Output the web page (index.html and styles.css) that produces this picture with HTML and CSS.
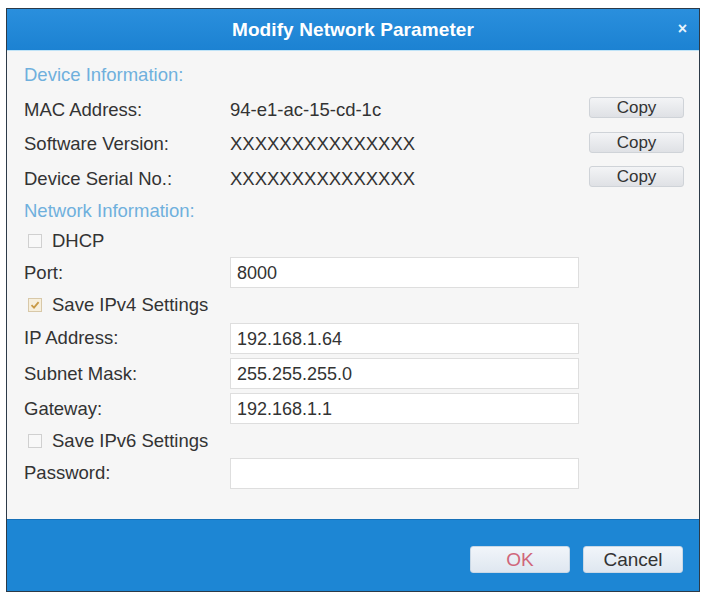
FILE: index.html
```html
<!DOCTYPE html>
<html>
<head>
<meta charset="utf-8">
<link rel="stylesheet" href="styles.css">
</head>
<body>
<div class="dialog">
  <div class="titlebar">
    <span class="title">Modify Network Parameter</span>
    <span class="close">×</span>
  </div>
  <div class="content">
    <div class="row h34"><span class="section">Device Information:</span></div>
    <div class="row h35"><span class="label">MAC Address:</span><span class="value">94-e1-ac-15-cd-1c</span><button class="copy">Copy</button></div>
    <div class="row h34"><span class="label">Software Version:</span><span class="value">XXXXXXXXXXXXXXX</span><button class="copy">Copy</button></div>
    <div class="row h35"><span class="label">Device Serial No.:</span><span class="value">XXXXXXXXXXXXXXX</span><button class="copy">Copy</button></div>
    <div class="row h30"><span class="section">Network Information:</span></div>
    <div class="row h29"><span class="check"></span><span class="checklabel">DHCP</span></div>
    <div class="row h35"><span class="label">Port:</span><div class="input">8000</div></div>
    <div class="row h30"><span class="check checked"><svg width="10" height="10" viewBox="0 0 10 10"><path d="M1.5 5.2 L4 7.6 L8.6 2.2" fill="none" stroke="#c99a45" stroke-width="1.8"/></svg></span><span class="checklabel">Save IPv4 Settings</span></div>
    <div class="row h36"><span class="label">IP Address:</span><div class="input">192.168.1.64</div></div>
    <div class="row h35"><span class="label">Subnet Mask:</span><div class="input">255.255.255.0</div></div>
    <div class="row h35"><span class="label">Gateway:</span><div class="input">192.168.1.1</div></div>
    <div class="row h29"><span class="check"></span><span class="checklabel">Save IPv6 Settings</span></div>
    <div class="row h36"><span class="label">Password:</span><div class="input"></div></div>
  </div>
  <div class="footer">
    <button class="btn ok">OK</button>
    <button class="btn cancel">Cancel</button>
  </div>
</div>
</body>
</html>
```
FILE: styles.css
```css
html, body {
  margin: 0;
  padding: 0;
  background: #ffffff;
}
body {
  padding: 8px 0 0 6px;
  font-family: "Liberation Sans", Arial, sans-serif;
}
.dialog {
  width: 692px;
  height: 582px;
  border: 1px solid #2c3a48;
  background: #f6f6f6;
  display: flex;
  flex-direction: column;
}
.titlebar {
  height: 41px;
  background: linear-gradient(#2a8fdd, #1c82d2);
  border-bottom: 1px solid #bfe3f7;
  position: relative;
  display: flex;
  align-items: center;
  justify-content: center;
}
.title {
  color: #ffffff;
  font-weight: bold;
  font-size: 19px;
  letter-spacing: 0.1px;
}
.close {
  position: absolute;
  right: 12px;
  top: 11px;
  color: #e8f4fc;
  font-weight: bold;
  font-size: 16px;
}
.content {
  flex: 1;
  padding: 7px 0 0 17px;
  display: flex;
  flex-direction: column;
}
.row {
  display: flex;
  align-items: center;
  font-size: 18.5px;
  color: #333;
}
.h29 { height: 29px; }
.h30 { height: 30px; }
.h34 { height: 34px; }
.h35 { height: 35px; }
.h36 { height: 36px; }
.section {
  color: #6fb0dd;
}
.label {
  width: 206px;
  flex: none;
}
.value {
  width: 359px;
  flex: none;
}
.copy {
  width: 95px;
  height: 21px;
  margin-top: -4px;
  padding: 0;
  border: 1px solid #cfd3d8;
  border-radius: 3px;
  background: linear-gradient(#f3f4f6, #dfe1e5);
  font-family: "Liberation Sans", Arial, sans-serif;
  font-size: 17px;
  line-height: 19px;
  color: #333;
  display: flex;
  justify-content: center;
  align-items: center;
}
.input {
  width: 341px;
  height: 29px;
  border: 1px solid #dedede;
  background: #ffffff;
  padding-left: 6px;
  line-height: 31px;
  font-size: 18px;
  color: #333;
  box-sizing: content-box;
}
.check {
  width: 12px;
  height: 12px;
  border: 1px solid #d0d0d0;
  background: #f8f8f8;
  margin-left: 4px;
  margin-right: 10px;
  display: flex;
  align-items: center;
  justify-content: center;
}
.check.checked {
  background: #f7efdc;
  border-color: #d8c8a8;
}
.footer {
  height: 72px;
  border-top: 1px solid #1670b8;
  background: #1d86d4;
  display: flex;
  justify-content: flex-end;
  align-items: flex-start;
  padding: 26px 16px 0 0;
  box-sizing: border-box;
  gap: 13px;
}
.btn {
  width: 100px;
  height: 27px;
  padding: 0;
  border: 1px solid #c9d8e6;
  border-radius: 3px;
  background: linear-gradient(#f1f5fa, #dfe7f0);
  font-family: "Liberation Sans", Arial, sans-serif;
  font-size: 19px;
}
.ok { color: #d0667a; }
.cancel { color: #333; }
```
